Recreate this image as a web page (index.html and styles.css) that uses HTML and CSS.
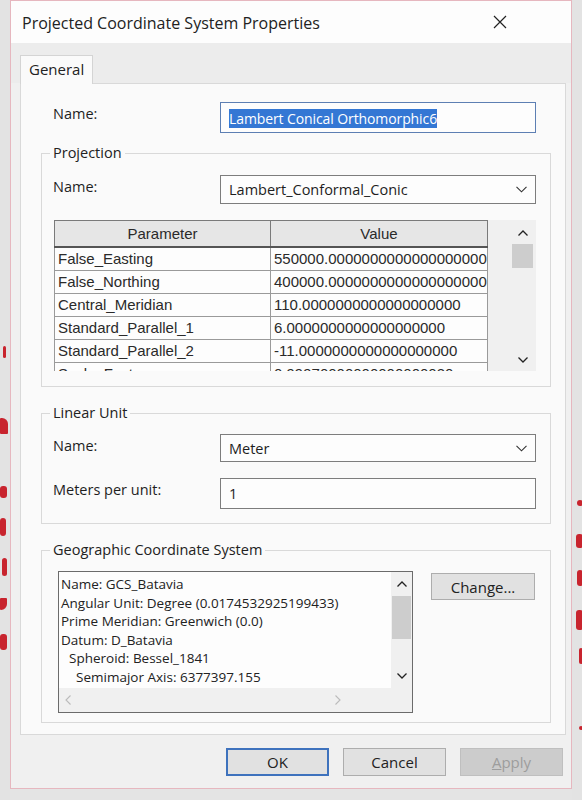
FILE: index.html
```html
<!DOCTYPE html>
<html>
<head>
<meta charset="utf-8">
<link rel="stylesheet" href="styles.css">
</head>
<body>
<div class="screen">
  <div class="gutter gutter-left">
    <span class="blob m1"></span>
    <span class="blob m2"></span>
    <span class="blob m3"></span>
    <span class="blob m4"></span>
    <span class="blob m5"></span>
    <span class="blob m6"></span>
    <span class="blob m7"></span>
  </div>
  <div class="window">
    <div class="titlebar">
      <span class="title">Projected Coordinate System Properties</span>
      <svg class="close" width="14" height="14" viewBox="0 0 14 14"><path d="M1 1 L13 13 M13 1 L1 13" stroke="#222" stroke-width="1.2" fill="none"/></svg>
    </div>
    <div class="tabstrip">
      <div class="tab">General</div>
    </div>
    <div class="panel">
      <div class="row top-row">
        <label class="lbl">Name:</label>
        <div class="field focused"><span class="sel">Lambert Conical Orthomorphic6</span></div>
      </div>

      <fieldset class="group group-proj">
        <legend>Projection</legend>
        <div class="row">
          <label class="lbl lbl-in">Name:</label>
          <div class="field select"><span>Lambert_Conformal_Conic</span><svg class="chev" width="11" height="7" viewBox="0 0 11 7"><path d="M0.5 0.8 L5.5 5.8 L10.5 0.8" stroke="#333" stroke-width="1.1" fill="none"/></svg></div>
        </div>
        <div class="grid">
          <div class="table-wrap">
            <table class="params">
              <colgroup><col class="c1"><col class="c2"></colgroup>
              <thead><tr><th>Parameter</th><th>Value</th></tr></thead>
              <tbody>
                <tr><td>False_Easting</td><td>550000.0000000000000000000</td></tr>
                <tr><td>False_Northing</td><td>400000.0000000000000000000</td></tr>
                <tr><td>Central_Meridian</td><td>110.0000000000000000000</td></tr>
                <tr><td>Standard_Parallel_1</td><td>6.0000000000000000000</td></tr>
                <tr><td>Standard_Parallel_2</td><td>-11.0000000000000000000</td></tr>
                <tr><td>Scale_Factor</td><td>0.99970000000000000030</td></tr>
              </tbody>
            </table>
          </div>
          <div class="grid-side">
            <div class="vscroll">
              <svg class="arr" width="10" height="6" viewBox="0 0 10 6"><path d="M0.5 5.5 L5 1 L9.5 5.5" stroke="#222" stroke-width="1.3" fill="none"/></svg>
              <div class="thumb"></div>
              <div class="track"></div>
              <svg class="arr" width="10" height="6" viewBox="0 0 10 6"><path d="M0.5 0.5 L5 5 L9.5 0.5" stroke="#222" stroke-width="1.3" fill="none"/></svg>
            </div>
          </div>
        </div>
      </fieldset>

      <fieldset class="group group-unit">
        <legend>Linear Unit</legend>
        <div class="row">
          <label class="lbl lbl-in">Name:</label>
          <div class="field select short"><span>Meter</span><svg class="chev" width="11" height="7" viewBox="0 0 11 7"><path d="M0.5 0.8 L5.5 5.8 L10.5 0.8" stroke="#333" stroke-width="1.1" fill="none"/></svg></div>
        </div>
        <div class="row row-gap">
          <label class="lbl lbl-in">Meters per unit:</label>
          <div class="field"><span>1</span></div>
        </div>
      </fieldset>

      <fieldset class="group group-gcs">
        <legend>Geographic Coordinate System</legend>
        <div class="gcs-row">
          <div class="textbox">
            <div class="tb-text">
              <div>Name: GCS_Batavia</div>
              <div>Angular Unit: Degree (0.0174532925199433)</div>
              <div>Prime Meridian: Greenwich (0.0)</div>
              <div>Datum: D_Batavia</div>
              <div class="ind1">Spheroid: Bessel_1841</div>
              <div class="ind2">Semimajor Axis: 6377397.155</div>
            </div>
            <div class="tb-vscroll">
              <svg class="arr" width="10" height="6" viewBox="0 0 10 6"><path d="M0.5 5.5 L5 1 L9.5 5.5" stroke="#222" stroke-width="1.3" fill="none"/></svg>
              <div class="thumb tb-thumb"></div>
              <div class="track"></div>
              <svg class="arr" width="10" height="6" viewBox="0 0 10 6"><path d="M0.5 0.5 L5 5 L9.5 0.5" stroke="#222" stroke-width="1.3" fill="none"/></svg>
            </div>
            <div class="tb-hscroll">
              <svg width="6" height="10" viewBox="0 0 6 10"><path d="M5.5 0.5 L1 5 L5.5 9.5" stroke="#bbb" stroke-width="1.1" fill="none"/></svg>
              <svg width="6" height="10" viewBox="0 0 6 10"><path d="M0.5 0.5 L5 5 L0.5 9.5" stroke="#bbb" stroke-width="1.1" fill="none"/></svg>
            </div>
            <div class="tb-corner"></div>
          </div>
          <button class="btn btn-change">Change...</button>
        </div>
      </fieldset>
    </div>
    <div class="buttons">
      <button class="btn btn-ok">OK</button>
      <button class="btn">Cancel</button>
      <button class="btn btn-disabled"><u>A</u>pply</button>
    </div>
  </div>
  <div class="gutter gutter-right">
    <span class="blob r1"></span>
    <span class="blob r2"></span>
    <span class="blob r3"></span>
    <span class="blob r4"></span>
    <span class="blob r5"></span>
    <span class="blob r6"></span>
  </div>
</div>
</body>
</html>
```

FILE: styles.css
```css
html, body {
  margin: 0;
  padding: 0;
}
body {
  background: #e4e4e4;
  font-family: "Open Sans", "Noto Sans", sans-serif;
  font-size: 14.5px;
  color: #1e1e1e;
  width: 582px;
  height: 800px;
  overflow: hidden;
}
.screen {
  display: flex;
  height: 800px;
}
.gutter {
  width: 10px;
  flex: none;
  display: flex;
  flex-direction: column;
  overflow: hidden;
  background: #e3e3e3;
}
.gutter-right {
  width: 11px;
  align-items: flex-end;
}
.blob {
  display: block;
  background: #c8242e;
  border-radius: 3px;
  flex: none;
}
.m1 { margin: 346px 0 0 3px; width: 3px; height: 12px; }
.m2 { margin: 60px 0 0 0; width: 8px; height: 16px; border-radius: 1px 6px 1px 1px; }
.m3 { margin: 52px 0 0 0; width: 7px; height: 12px; }
.m4 { margin: 20px 0 0 0; width: 6px; height: 18px; }
.m5 { margin: 22px 0 0 2px; width: 5px; height: 18px; }
.m6 { margin: 22px 0 0 0; width: 7px; height: 12px; border-radius: 1px 1px 6px 1px; }
.m7 { margin: 24px 0 0 0; width: 7px; height: 16px; }
.r1 { margin-top: 500px; width: 6px; height: 6px; }
.r2 { margin-top: 28px; width: 7px; height: 14px; }
.r3 { margin-top: 22px; width: 6px; height: 16px; }
.r4 { margin-top: 24px; width: 7px; height: 20px; }
.r5 { margin-top: 18px; width: 4px; height: 16px; }
.r6 { margin-top: 62px; width: 4px; height: 4px; }

.window {
  width: 562px;
  height: 789px;
  box-sizing: border-box;
  border: 1px solid #e6b7bf;
  background: #f0f0f0;
  display: flex;
  flex-direction: column;
  flex: none;
}
.titlebar {
  height: 42px;
  flex: none;
  background: #fdfdfd;
  display: flex;
  align-items: center;
  justify-content: space-between;
  padding: 0 64px 0 11px;
}
.title {
  font-size: 16px;
  color: #222;
  margin-top: 1px;
}
.close {
  display: block;
}
.tabstrip {
  height: 40px;
  flex: none;
  background: #ececec;
  display: flex;
  align-items: flex-end;
  padding-left: 9px;
}
.tab {
  width: 73px;
  height: 29px;
  box-sizing: border-box;
  border: 1px solid #d4d4d4;
  border-bottom: none;
  background: #fafafa;
  margin-bottom: -1px;
  position: relative;
  padding: 3px 0 0 8px;
  font-size: 15px;
  color: #222;
}
.panel {
  margin-left: 9px;
  width: 546px;
  height: 652px;
  box-sizing: border-box;
  border: 1px solid #d9d9d9;
  background: #fafafa;
  flex: none;
}
.row {
  display: flex;
  align-items: flex-start;
}
.top-row {
  margin: 18px 0 0 32px;
}
.lbl {
  width: 167px;
  flex: none;
  font-size: 14.5px;
  line-height: 20px;
  padding-top: 2px;
}
.field {
  width: 316px;
  height: 31px;
  box-sizing: border-box;
  border: 1px solid #7d7d7d;
  background: #fdfdfd;
  display: flex;
  align-items: center;
  padding-left: 8px;
  font-size: 14.5px;
}
.focused {
  border-color: #5d7fb3;
}
.sel {
  background: #3477d4;
  color: #fff;
  line-height: 19px;
  margin-top: 1px;
  font-size: 14px;
  letter-spacing: -0.1px;
}
.select {
  height: 29px;
  justify-content: space-between;
  padding-right: 8px;
}
.select.short {
  height: 28px;
}
.chev {
  display: block;
}

.group {
  margin: 10px 0 0 20px;
  width: 510px;
  box-sizing: border-box;
  border: 1px solid #d9d9d9;
  padding: 12px 13px 15px 11px;
  min-width: 0;
}
.group legend {
  padding: 0 3px;
  margin-left: -3px;
  font-size: 14.5px;
  line-height: 20px;
  color: #222;
}
.group-unit {
  margin-top: 16px;
  padding-top: 11px;
  padding-bottom: 14px;
}
.group-gcs {
  margin-top: 16px;
  padding-top: 11px;
  padding-bottom: 9px;
}
.row-gap {
  margin-top: 16px;
}

.grid {
  margin: 16px 0 0 1px;
  width: 482px;
  height: 151px;
  display: flex;
  background: #f0f0f0;
}
.table-wrap {
  width: 434px;
  height: 151px;
  overflow: hidden;
  flex: none;
}
.params {
  border-collapse: collapse;
  table-layout: fixed;
  width: 433px;
  font-family: "Liberation Sans", Arial, sans-serif;
  font-size: 15px;
  color: #2a2a2a;
  background: #fdfdfd;
}
.params col.c1 { width: 216px; }
.params col.c2 { width: 217px; }
.params th {
  height: 25px;
  padding: 0;
  background: #e6e6e6;
  font-weight: normal;
  text-align: center;
  border: 1px solid #7a7a7a;
  border-bottom: 2px solid #555;
}
.params td {
  height: 22px;
  padding: 0 3px;
  border: 1px solid #9a9a9a;
  white-space: nowrap;
  overflow: hidden;
  line-height: 20px;
}
.grid-side {
  flex: 1;
  padding-left: 23px;
}
.vscroll {
  width: 23px;
  height: 151px;
  display: flex;
  flex-direction: column;
  align-items: center;
  background: #f0f0f0;
}
.vscroll .arr {
  margin: 10px 0 8px;
  flex: none;
}
.thumb {
  width: 21px;
  height: 24px;
  background: #cdcdcd;
  flex: none;
}
.track {
  flex: 1;
}

.gcs-row {
  display: flex;
  align-items: flex-start;
}
.textbox {
  margin-left: 5px;
  width: 355px;
  height: 142px;
  box-sizing: border-box;
  border: 1px solid #6b6b6b;
  background: #fdfdfd;
  display: grid;
  grid-template-columns: 1fr 21px;
  grid-template-rows: 1fr 24px;
  flex: none;
}
.tb-text {
  padding: 3px 0 0 2px;
  font-size: 13.5px;
  line-height: 18.6px;
  color: #222;
  white-space: nowrap;
  overflow: hidden;
}
.ind1 { padding-left: 8px; }
.ind2 { padding-left: 15px; }
.tb-vscroll {
  background: #f0f0f0;
  display: flex;
  flex-direction: column;
  align-items: center;
}
.tb-vscroll .arr {
  margin: 9px 0;
  flex: none;
}
.tb-thumb {
  width: 19px;
  height: 43px;
}
.tb-hscroll {
  background: #f0f0f0;
  display: flex;
  align-items: center;
  justify-content: space-between;
  padding: 0 50px 0 6px;
}
.tb-corner {
  background: #f0f0f0;
}

.btn {
  width: 103px;
  height: 28px;
  box-sizing: border-box;
  border: 1px solid #adadad;
  background: #e1e1e1;
  font-family: "Open Sans", "Noto Sans", sans-serif;
  font-size: 15px;
  color: #222;
  padding: 0;
  flex: none;
}
.btn-change {
  margin: 2px 0 0 18px;
  width: 104px;
  height: 27px;
}
.buttons {
  display: flex;
  justify-content: flex-end;
  gap: 14px;
  padding: 13px 8px 0 0;
}
.btn-ok {
  border: 2px solid #3e72bd;
}
.btn-disabled {
  background: #cccccc;
  border-color: #bfbfbf;
  color: #9d9d9d;
}
.btn-disabled u {
  text-decoration: underline;
}
```
